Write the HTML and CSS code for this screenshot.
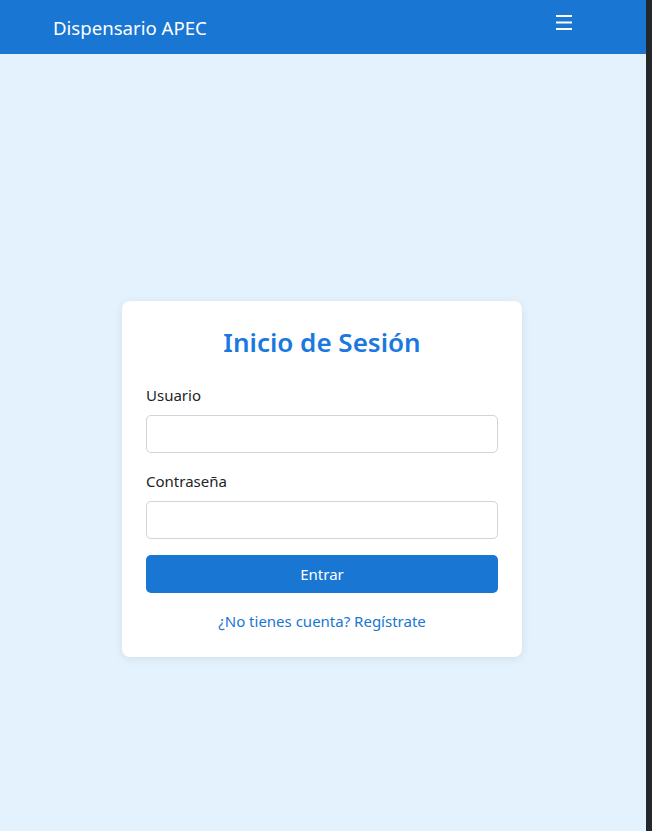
FILE: index.html
```html
<!DOCTYPE html>
<html lang="es">
<head>
<meta charset="utf-8">
<title>Dispensario APEC</title>
<link rel="stylesheet" href="styles.css">
</head>
<body>
<div class="page">
  <nav class="navbar">
    <div class="nav-inner">
      <span class="brand">Dispensario APEC</span>
      <button class="toggler" aria-label="menu">
        <svg width="16" height="16" viewBox="0 0 16 16"><path d="M0 2h16M0 8.5h16M0 15h16" stroke="#fff" stroke-width="2" fill="none"/></svg>
      </button>
    </div>
  </nav>
  <main class="main">
    <form class="card">
      <h2 class="title">Inicio de Sesión</h2>
      <label class="label">Usuario</label>
      <input class="input" type="text">
      <label class="label label-gap">Contraseña</label>
      <input class="input" type="password">
      <button class="btn" type="button">Entrar</button>
      <a class="link" href="#">¿No tienes cuenta? Regístrate</a>
    </form>
  </main>
</div>
<div class="strip"></div>
</body>
</html>
```
FILE: styles.css
```css
html, body { margin: 0; height: 100%; }
body {
  display: grid;
  grid-template-columns: 1fr 6px;
  font-family: "Noto Sans", "Open Sans", sans-serif;
  background: #e3f2fd;
  color: #212529;
  overflow: hidden;
}
.strip { background: #25282b; }
.page { display: flex; flex-direction: column; min-height: 100%; }
.navbar { background: #1976d2; height: 54px; }
.nav-inner {
  width: 540px; margin: 0 auto; height: 100%;
  display: flex; align-items: center; justify-content: space-between;
}
.brand { color: #fff; font-size: 18.6px; }
.toggler {
  background: none; border: 0; padding: 0; margin-right: 21px;
  display: flex; align-self: flex-start; margin-top: 14px;
}
.main { display: flex; justify-content: center; padding: 247px 2px 0 0; }
.card {
  width: 400px; box-sizing: border-box; background: #fff;
  border-radius: 8px; padding: 24px;
  box-shadow: 0 2px 10px rgba(0,0,0,0.08);
  display: flex; flex-direction: column;
}
.title {
  margin: 0 0 24px; text-align: center; color: #1a78e0;
  font-size: 26px; font-weight: 600; line-height: 34px;
}
.label { font-size: 15px; line-height: 24px; margin-bottom: 8px; }
.label-gap { margin-top: 16px; }
.input {
  height: 38px; box-sizing: border-box; border: 1px solid #ced4da;
  border-radius: 5px; font: inherit;
}
.btn {
  margin-top: 16px; height: 38px; border: 0; border-radius: 5px;
  background: #1976d2; color: #fff; font: inherit; font-size: 15px;
}
.link {
  margin-top: 16px; text-align: center; color: #1976d2;
  text-decoration: none; font-size: 15px; line-height: 24px;
}
```
